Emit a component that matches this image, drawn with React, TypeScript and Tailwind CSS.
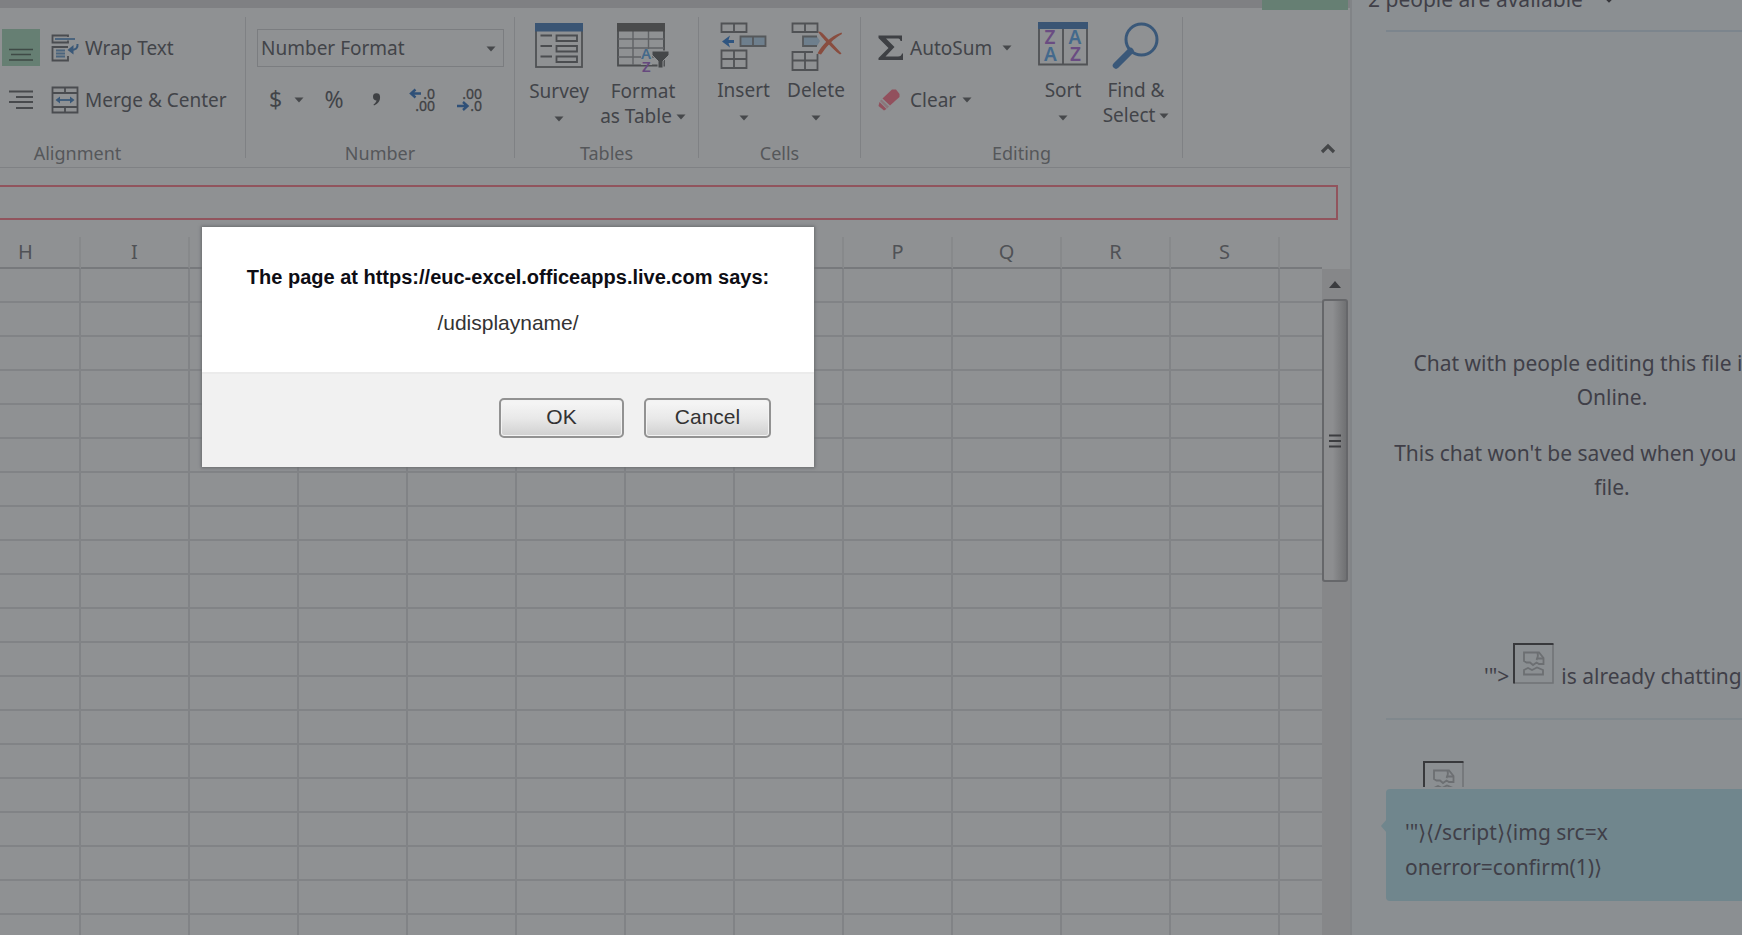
import type { ReactNode } from "react";

const COLUMNS = ["H", "I", "J", "K", "L", "M", "N", "O", "P", "Q", "R", "S"];
const ROWS = Array.from({ length: 20 }, (_, i) => i + 1);

function Caret({ className = "" }: { className?: string }) {
  return (
    <svg className={`block shrink-0 ${className}`} width="10" height="6" viewBox="0 0 10 6" aria-hidden="true">
      <path d="M0.5 0.5h9L5 5.5z" fill="#46484b" />
    </svg>
  );
}

function Group({
  label,
  width,
  labelClass = "",
  children,
}: {
  label: string;
  width: string;
  labelClass?: string;
  children: ReactNode;
}) {
  return (
    <section aria-label={label} className={`flex shrink-0 ${width}`}>
      <div className="flex min-w-0 flex-1 flex-col">
        <div className="flex h-[124px] items-start">{children}</div>
        <div className={`text-center text-[18px] leading-6 text-[#55575a] ${labelClass}`}>{label}</div>
      </div>
      <div className="h-[141px] w-px bg-[#7f8184]" />
    </section>
  );
}

function TallButton({
  icon,
  lines,
  width,
  inline = false,
}: {
  icon: ReactNode;
  lines: string[];
  width: string;
  inline?: boolean;
}) {
  return (
    <button type="button" className={`flex shrink-0 flex-col items-center ${width}`}>
      <span className="flex h-14 items-start">{icon}</span>
      <span className="whitespace-nowrap leading-[25px]">{lines[0]}</span>
      {inline ? (
        <span className="flex items-center gap-1 whitespace-nowrap leading-[25px]">
          {lines[1]}
          <Caret />
        </span>
      ) : (
        <Caret className="mt-3" />
      )}
    </button>
  );
}

function BottomAlignIcon() {
  return (
    <svg width="26" height="37" viewBox="0 0 26 37" fill="none" stroke="#3f4a46" strokeWidth="1.5" aria-hidden="true">
      <path d="M1 20.500h24M3 25.500h20M1 31h24" />
    </svg>
  );
}

function RightAlignIcon() {
  return (
    <svg width="26" height="26" viewBox="0 0 26 26" fill="none" stroke="#484a4d" strokeWidth="1.800" aria-hidden="true">
      <path d="M1 4.500h24M8 10h17M1 15h24M8 21h17" />
    </svg>
  );
}

function WrapIcon() {
  return (
    <svg width="29" height="28" viewBox="0 0 29 28" fill="none" aria-hidden="true">
      <g stroke="#4a4c50" strokeWidth="1.800">
        <path d="M17 6.500V8.500H1.500V1.500H17V3" />
        <path d="M17 13H1.500V26.500H17V22" />
      </g>
      <path d="M4 5h20" stroke="#3a5878" strokeWidth="1.600" />
      <path d="M5 16.500h9M5 19.500h9M5 22.500h9" stroke="#4b647d" strokeWidth="1.800" />
      <path d="M26.500 10c.5 4-1.500 6-7 6" stroke="#3a5878" strokeWidth="2" />
      <path d="M22.500 11L16.500 16l6 4.500z" fill="#3a5878" />
    </svg>
  );
}

function MergeIcon() {
  return (
    <svg width="28" height="28" viewBox="0 0 28 28" fill="none" aria-hidden="true">
      <path
        d="M1.500 1.500h25v25h-25zM1.500 7h25M1.500 21h25M14 1.500V7M14 21v5.500"
        stroke="#4a4c50"
        strokeWidth="1.800"
      />
      <path d="M6 14h16" stroke="#3a5878" strokeWidth="1.800" />
      <path d="M9 10.500L4.500 14 9 17.500zM19 10.500l4.500 3.500-4.500 3.500z" fill="#3a5878" />
    </svg>
  );
}

function DecimalIcon({ increase }: { increase: boolean }) {
  return (
    <svg width="27" height="30" viewBox="0 0 27 30" aria-hidden="true">
      <g fontFamily="Noto Sans, sans-serif" fontSize="14" fill="#3f4144" stroke="#3f4144" strokeWidth="0.3" textAnchor="end">
        <text x="26" y="14">{increase ? ".0" : ".00"}</text>
        <text x="26" y="26">{increase ? ".00" : ".0"}</text>
      </g>
      {increase ? (
        <path d="M12 8.500H3M6.500 4.500L2 8.500l4.500 4" stroke="#2f5078" strokeWidth="2.400" fill="none" />
      ) : (
        <path d="M1 21h9M7 17l4.500 4L7 25" stroke="#2f5078" strokeWidth="2.400" fill="none" />
      )}
    </svg>
  );
}

function SurveyIcon() {
  return (
    <svg width="48" height="46" viewBox="0 0 48 46" fill="none" aria-hidden="true">
      <rect x="1" y="1" width="46" height="43" stroke="#4f5154" strokeWidth="1.800" />
      <path d="M0 0h48v8.500H0z" fill="#3a5574" />
      <g stroke="#4b4d50" strokeWidth="1.800">
        <path d="M5.500 12.500h11.500M5.500 23h11.500M5.500 33.500h11.500" />
        <path d="M21.500 12.500h20.500v5.500H21.500zM21.500 23h20.500v5.500H21.500zM21.500 33.500h20.500v5.500H21.500z" />
      </g>
    </svg>
  );
}

function FormatTableIcon() {
  return (
    <svg width="52" height="54" viewBox="0 0 52 54" fill="none" aria-hidden="true">
      <path d="M1 1h46v41.500H1z" stroke="#4b4d4f" strokeWidth="1.800" />
      <path d="M1 16h46M1 25h46M1 34h46M16 8v34M31.500 8v34" stroke="#606265" strokeWidth="1.400" />
      <path d="M0 0h48v8.500H0z" fill="#4a4b4c" />
      <path d="M24 26h11v16h-11z" fill="#8f9193" />
      <path d="M35 28h17v4l-6 6v7h-5v-7l-6-6z" fill="#454749" stroke="#8f9193" />
      <g fontFamily="Noto Sans, sans-serif" fontSize="15" fontWeight="600">
        <text x="24" y="36" fill="#44698a">A</text>
        <text x="25" y="49" fill="#66497e">Z</text>
      </g>
    </svg>
  );
}

function InsertIcon() {
  return (
    <svg width="47" height="50" viewBox="0 0 47 50" fill="none" aria-hidden="true">
      <path
        d="M1.500 1.500h25v8.500h-25zM14 1.500V10M1.500 28.500h25v17.500h-25zM14 28.500V46M1.500 37h25"
        stroke="#505255"
        strokeWidth="1.800"
      />
      <path d="M20.500 14.500h25V24h-25zM33 14.500V24" fill="#6e7f8d" stroke="#55585b" strokeWidth="1.800" />
      <path d="M14 19.500H5" stroke="#2f5580" strokeWidth="3" />
      <path d="M10 13.500L2 19.500l8 6-2-6z" fill="#2f5580" />
    </svg>
  );
}

function DeleteIcon() {
  return (
    <svg width="51" height="50" viewBox="0 0 51 50" fill="none" aria-hidden="true">
      <path
        d="M1.500 1.500h25v8.500h-25zM14 1.500V10M22 30H1.500v18h25V32M14 30v18M1.500 38.500h25"
        stroke="#505255"
        strokeWidth="1.800"
      />
      <path d="M26 14.500H12V24h14" fill="#6e7f8d" stroke="#55585b" strokeWidth="1.800" />
      <path d="M26 14.500l3 4.500-3 5z" fill="#6e7f8d" />
      <path d="M27 9.500c3.500 0 5 2 8 5.500l5 5c3.500 4 7 7.500 10.500 11.500l-1.500 1c-5-3.500-8-7-11.500-10.500-3-3-8-8-10.500-12.500z" fill="#894d3f" />
      <path d="M50.500 10.500l.5 1.500c-6 3.500-9 6-13 10.500-3 3-5.500 6.500-8 10l-3.500-1c2.500-5 5.500-8.500 9-12 4.500-4 9-7 15-9z" fill="#894d3f" />
    </svg>
  );
}

function SigmaIcon() {
  return (
    <svg width="26" height="26" viewBox="0 0 26 26" aria-hidden="true">
      <path d="M0.500 0.500H24V6h-1.500C22 4 21.500 3.500 19 3.500H8L16.500 12 7.500 21.500H20c2.500 0 3.500-1 4-3H25V25H0.500v-2L10.500 13 0.500 3z" fill="#3e4044" />
    </svg>
  );
}

function EraserIcon() {
  return (
    <svg width="22" height="22" viewBox="0 0 22 22" aria-hidden="true">
      <path d="M14 0.500h4L21.500 5v3L12 16.500 4.500 9.500z" fill="#92505d" />
      <path d="M3.500 10.500L11 17.500 9 19.500 2 12z" fill="#8b767b" />
      <path d="M1.500 13L8.500 20 6 21.500 0.500 17z" fill="#92505d" />
    </svg>
  );
}

function SortIcon() {
  return (
    <svg width="50" height="44" viewBox="0 0 50 44" aria-hidden="true">
      <path d="M1 1h48v41.500H1zM25 7v36" fill="none" stroke="#505255" strokeWidth="1.800" />
      <path d="M0 0h50v7H0z" fill="#3a5574" />
      <g fontFamily="Noto Sans, sans-serif" fontSize="19" fontWeight="600" textAnchor="middle">
        <text x="12" y="22" fill="#6a4c82">Z</text>
        <text x="12.500" y="39" fill="#44698c">A</text>
        <text x="37" y="22" fill="#44698c">A</text>
        <text x="37.500" y="39" fill="#6a4c82">Z</text>
      </g>
    </svg>
  );
}

function FindIcon() {
  return (
    <svg width="48" height="48" viewBox="0 0 48 48" fill="none" aria-hidden="true">
      <circle cx="29.500" cy="17.500" r="15.500" stroke="#3a5879" strokeWidth="3" />
      <path d="M18.500 29L4 43.500" stroke="#3a5879" strokeWidth="6.500" strokeLinecap="round" />
    </svg>
  );
}

function BrokenImage() {
  return (
    <svg className="inline-block shrink-0" width="41" height="41" viewBox="0 0 41 41" fill="none" aria-hidden="true">
      <path d="M40 1v39H1" stroke="#707376" strokeWidth="1.500" />
      <path d="M1 40.500V1h39.500" stroke="#38393c" strokeWidth="2" />
      <g stroke="#6c6f72" strokeWidth="1.800">
        <path d="M11 18V9.500h15l4.500 5.500V21h-4.500l-2.500-1.500-3.500 2.500-3-2.500-3.500 0z" />
        <path d="M24.500 9.500c1 3 .5 5-1 7.500M24.500 15.500h6" />
        <path d="M11 31.500v-4.500l4-2 4 2 5-2.500 6 2.500v4.500z" />
      </g>
    </svg>
  );
}

function Ribbon() {
  return (
    <div className="flex h-40 shrink-0 overflow-hidden border-b border-[#7f8184] pt-[9px] text-[19px] text-[#424449]">
      <Group label="Alignment" width="w-[246px]" labelClass="pr-[90px]">
        <div className="grid grid-cols-[38px_1fr] gap-x-[11px] gap-y-[14px] pl-[2px] pt-3">
          <button type="button" aria-label="Bottom align" className="flex h-[37px] w-[38px] justify-center bg-[#667f73]">
            <BottomAlignIcon />
          </button>
          <button type="button" className="flex h-[38px] items-center gap-[5px] whitespace-nowrap">
            <WrapIcon />
            Wrap Text
          </button>
          <button type="button" aria-label="Align right" className="flex h-[38px] w-[38px] items-center justify-center">
            <RightAlignIcon />
          </button>
          <button type="button" className="flex h-[38px] items-center gap-[6px] whitespace-nowrap">
            <MergeIcon />
            Merge &amp; Center
          </button>
        </div>
      </Group>

      <Group label="Number" width="w-[269px]">
        <div className="flex w-full flex-col gap-[14px] pl-[11px] pr-[10px] pt-3">
          <div className="relative">
            <select
              aria-label="Number format"
              className="h-[38px] w-full appearance-none border border-[#7b7d80] bg-transparent pl-[3px] pt-px outline-none"
            >
              <option>Number Format</option>
            </select>
            <Caret className="pointer-events-none absolute right-2 top-[17px]" />
          </div>
          <div className="flex h-[37px] items-center justify-between pl-3 pr-[21px]">
            <button type="button" aria-label="Currency" className="flex items-center gap-3 text-[23px]">
              $
              <Caret />
            </button>
            <button type="button" aria-label="Percent" className="text-[23px]">%</button>
            <button type="button" aria-label="Comma style" className="w-6">
              <svg className="mx-auto" width="9" height="13" viewBox="0 0 9 13" aria-hidden="true">
                <path d="M1 4a3.500 3.500 0 0 1 7-.5C8.500 7.500 6 11 2 12.500l-.5-1C3.500 10 4.500 8.500 4.500 7.500 2.500 7.500 1 6 1 4z" fill="#3f4144" />
              </svg>
            </button>
            <button type="button" aria-label="Increase decimal">
              <DecimalIcon increase />
            </button>
            <button type="button" aria-label="Decrease decimal">
              <DecimalIcon increase={false} />
            </button>
          </div>
        </div>
      </Group>

      <Group label="Tables" width="w-[184px]">
        <div className="flex pl-1 pt-[6px]">
          <TallButton icon={<SurveyIcon />} lines={["Survey"]} width="w-20" />
          <TallButton icon={<FormatTableIcon />} lines={["Format", "as Table"]} width="w-[88px]" inline />
        </div>
      </Group>

      <Group label="Cells" width="w-[162px]">
        <div className="flex pl-2 pt-[5px]">
          <TallButton icon={<InsertIcon />} lines={["Insert"]} width="w-[73px]" />
          <TallButton icon={<DeleteIcon />} lines={["Delete"]} width="w-[72px]" />
        </div>
      </Group>

      <Group label="Editing" width="w-[322px]">
        <div className="flex w-full pl-[17px]">
          <div className="flex w-[150px] flex-col items-start gap-[14px] pt-3">
            <button type="button" className="flex h-[38px] items-center gap-[6px]">
              <SigmaIcon />
              AutoSum
              <Caret className="ml-1" />
            </button>
            <button type="button" className="flex h-[38px] items-center gap-[6px]">
              <EraserIcon />
              <span className="pl-1">Clear</span>
              <Caret />
            </button>
          </div>
          <div className="flex pt-[5px]">
            <TallButton icon={<SortIcon />} lines={["Sort"]} width="w-[70px]" />
            <TallButton icon={<FindIcon />} lines={["Find &", "Select"]} width="w-[76px]" inline />
          </div>
        </div>
      </Group>

      <button type="button" aria-label="Collapse the ribbon" className="mb-3 ml-auto mr-[14px] self-end">
        <svg width="16" height="12" viewBox="0 0 16 12" fill="none" aria-hidden="true">
          <path d="M2 9l6-6 6 6" stroke="#454749" strokeWidth="3.200" />
        </svg>
      </button>
    </div>
  );
}

function Sheet() {
  return (
    <div className="flex min-h-0 flex-1 pt-[17px]">
      <div className="min-w-0 flex-1 overflow-hidden">
        <table className="-ml-7 w-[calc(100%+28px)] table-fixed border-separate border-spacing-0">
          <thead>
            <tr>
              {COLUMNS.map((name) => (
                <th
                  key={name}
                  scope="col"
                  className="h-8 w-[109px] border-b-2 border-r-2 border-b-[#77797c] border-r-[#87898b] p-0 text-[20px] font-normal leading-6 text-[#505256]"
                >
                  {name}
                </th>
              ))}
              <th className="border-b-2 border-[#77797c] p-0" />
            </tr>
          </thead>
          <tbody>
            {ROWS.map((row) => (
              <tr key={row}>
                {COLUMNS.map((name) => (
                  <td key={name} className="h-[34px] border-b-2 border-r-2 border-[#818386] p-0" />
                ))}
                <td className="border-b-2 border-[#818386] p-0" />
              </tr>
            ))}
          </tbody>
        </table>
      </div>
      <div className="mt-8 flex w-7 shrink-0 flex-col">
        <div className="flex flex-1 flex-col bg-[#868789] pr-[2px]">
          <button type="button" aria-label="Scroll up" className="flex h-[30px] items-center justify-center">
            <svg width="12" height="7" viewBox="0 0 12 7" aria-hidden="true">
              <path d="M6 0l6 7H0z" fill="#3b3c3f" />
            </svg>
          </button>
          <div className="flex h-[283px] items-center justify-center rounded-[3px] border-2 border-[#66676a] bg-linear-to-r from-[#8d8e90] from-40% to-[#707173]">
            <svg width="12" height="14" viewBox="0 0 12 14" fill="none" aria-hidden="true">
              <path d="M0 1.500h12M0 7h12M0 12.500h12" stroke="#3c3d40" strokeWidth="2" />
            </svg>
          </div>
        </div>
      </div>
    </div>
  );
}

function ChatPanel() {
  return (
    <aside className="w-[392px] shrink-0 overflow-hidden border-l-2 border-[#818487] bg-[#8b8f92] text-[21px] leading-[34px] text-[#403f48]">
      <div className="ml-[34px] flex h-8 w-[452px] items-start border-b-2 border-[#7c858d]">
        <button type="button" className="-ml-[18px] -mt-[18px] flex items-center gap-5 whitespace-nowrap">
          2 people are available
          <svg width="12" height="8" viewBox="0 0 12 8" fill="none" aria-hidden="true">
            <path d="M1 1l5 5 5-5" stroke="#37373c" strokeWidth="2.500" />
          </svg>
        </button>
      </div>

      <div className="ml-[34px] flex h-[688px] w-[452px] flex-col border-b-2 border-[#80888d] pt-[314px] text-center">
        <p className="whitespace-nowrap">
          Chat with people editing this file in Excel
          <br />
          Online.
        </p>
        <p className="mt-[22px] whitespace-nowrap">
          This chat won't be saved when you close the
          <br />
          file.
        </p>
        <p className="mt-auto flex items-end whitespace-nowrap pb-[34px] pl-[98px]">
          <span className="-mb-[9px] pr-1">'"&gt;</span>
          <BrokenImage />
          <span className="-mb-[9px] pl-[7px]">is already chatting</span>
        </p>
      </div>

      <div className="ml-[34px] w-[452px] pt-[41px]">
        <div className="flex h-[26px] overflow-hidden pl-[37px]">
          <BrokenImage />
        </div>
        <div className="relative mt-[2px] h-[112px] rounded-[4px] bg-[#70868d] px-[19px] pt-[26px]">
          <svg className="absolute -left-[5px] top-[30px]" width="6" height="14" viewBox="0 0 6 14" aria-hidden="true">
            <path d="M6 0v14L0 7z" fill="#70868d" />
          </svg>
          '"<span className="font-[DejaVu_Sans] font-extralight">⟩⟨</span>/script
          <span className="font-[DejaVu_Sans] font-extralight">⟩⟨</span>img src=x
          <br />
          onerror=confirm(1)<span className="font-[DejaVu_Sans] font-extralight">⟩</span>
        </div>
      </div>
    </aside>
  );
}

function ConfirmDialog() {
  const button =
    "h-10 rounded-[5px] border-2 border-[#929292] bg-linear-to-b from-[#f4f4f4] from-10% via-[#e9e9e9] via-50% to-[#d0d0d0] pb-[2px] text-[21px] leading-6 text-[#333] shadow-[inset_0_0_0_1px_#f3f3f3]";
  return (
    <div
      role="dialog"
      aria-labelledby="dialog-title"
      className="absolute left-[202px] top-[227px] w-[612px] bg-white text-center font-[Liberation_Sans] shadow-[0_0_3px_1px_#6b6d6f]"
    >
      <div className="flex h-[145px] flex-col gap-[22px] pt-[38px]">
        <h1 id="dialog-title" className="whitespace-nowrap text-[20px] font-bold leading-6 text-[#0d0d14]">
          The page at https://euc-excel.officeapps.live.com says:
        </h1>
        <p className="text-[21px] leading-6 text-[#333]">/udisplayname/</p>
      </div>
      <div className="flex h-[95px] items-start justify-end gap-5 border-t-2 border-[#ebebeb] bg-[#f1f1f1] pr-[43px] pt-6">
        <button type="button" className={`w-[125px] ${button}`}>OK</button>
        <button type="button" className={`w-[127px] ${button}`}>Cancel</button>
      </div>
    </div>
  );
}

export default function App() {
  return (
    <div className="relative flex h-screen overflow-hidden bg-[#8f9193] font-['Noto_Sans',sans-serif]">
      <main className="flex min-w-0 flex-1 flex-col">
        <div className="flex h-2 shrink-0 justify-end bg-[#7f8083] pr-[2px]">
          <div className="h-[10px] w-[86px] bg-[#667f73]" />
        </div>
        <Ribbon />
        <div className="pr-[12px] pt-[17px]">
          <input
            aria-label="Formula bar"
            className="block h-[35px] w-full border-2 border-l-0 border-[#91545d] bg-transparent px-2 outline-none"
          />
        </div>
        <Sheet />
      </main>
      <ChatPanel />
      <ConfirmDialog />
    </div>
  );
}
